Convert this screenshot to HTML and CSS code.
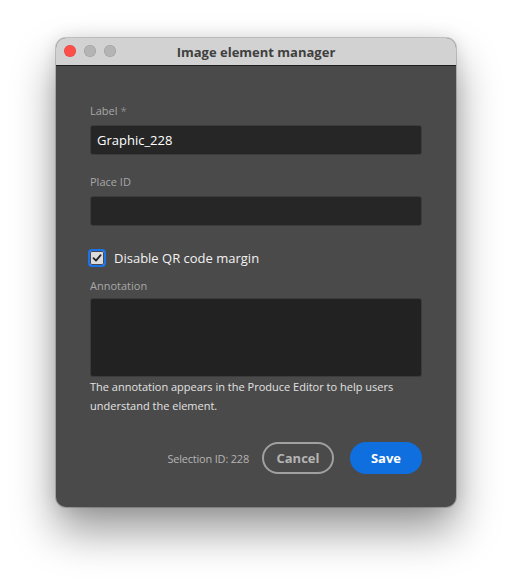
FILE: index.html
```html
<!DOCTYPE html>
<html lang="en">
<head>
  <meta charset="UTF-8">
  <title>Image element manager</title>
  <link rel="stylesheet" href="styles.css">
</head>
<body>

  <div class="window">
    <div class="titlebar">
      <div class="lights">
        <span class="light red"></span>
        <span class="light"></span>
        <span class="light"></span>
      </div>
      <div class="title">Image element manager</div>
    </div>

    <div class="content">
      <label class="field-label">Label <span class="req">*</span></label>
      <div class="input">Graphic_228</div>

      <label class="field-label second">Place ID</label>
      <div class="input"></div>

      <div class="check-row">
        <span class="checkbox">
          <svg width="12" height="12" viewBox="0 0 12 12">
            <path d="M2.5 6.2 L5 8.6 L9.6 3.2" fill="none" stroke="#222" stroke-width="1.8" stroke-linecap="round" stroke-linejoin="round"/>
          </svg>
        </span>
        <span class="check-text">Disable QR code margin</span>
      </div>

      <label class="field-label annot">Annotation</label>
      <div class="textarea"></div>
      <p class="help">The annotation appears in the Produce Editor to help users understand the element.</p>

      <div class="footer">
        <span class="sel-id">Selection ID: 228</span>
        <button class="btn cancel">Cancel</button>
        <button class="btn save">Save</button>
      </div>
    </div>
  </div>

</body>
</html>
```

FILE: styles.css
```css
html {
  background: #fff;
}

body {
  margin: 0;
  padding: 38px 0 0 56px;
  min-height: 582px;
  box-sizing: border-box;
  font-family: "Open Sans", "Noto Sans", sans-serif;
}

.window {
  width: 400px;
  height: 469px;
  background: #4a4a4a;
  border-radius: 10px;
  overflow: hidden;
  box-shadow: 0 0 0 1px rgba(0, 0, 0, 0.18), 0 0 18px rgba(0, 0, 0, 0.12), 0 24px 44px rgba(0, 0, 0, 0.4);
}

.titlebar {
  position: relative;
  height: 27px;
  background: #d2d2d2;
  border-bottom: 1px solid #1c1c1c;
  display: flex;
  align-items: center;
  justify-content: center;
}

.lights {
  position: absolute;
  left: 8px;
  top: 7px;
  display: flex;
  gap: 8px;
}

.light {
  width: 12px;
  height: 12px;
  border-radius: 50%;
  background: #b4b4b4;
  box-shadow: inset 0 0 0 0.5px rgba(0, 0, 0, 0.15);
}

.light.red {
  background: #fd4e4a;
}

.title {
  font-size: 13px;
  font-weight: 700;
  color: #404040;
  margin-top: 1px;
}

.content {
  padding: 37px 34px 0;
  display: flex;
  flex-direction: column;
}

.field-label {
  font-size: 11px;
  line-height: 16px;
  color: #a8a8a8;
  margin-bottom: 6px;
}

.field-label.second {
  margin-top: 19px;
}

.req {
  color: #8a8a8a;
}

.input {
  height: 28px;
  background: #262626;
  border: 1px solid #3c3c3c;
  border-radius: 3px;
  color: #fff;
  font-size: 13px;
  line-height: 28px;
  padding: 0 6px;
}

.check-row {
  display: flex;
  align-items: center;
  gap: 8px;
  margin: 22px 0 0 -2px;
  height: 20px;
}

.checkbox {
  width: 14px;
  height: 14px;
  border: 2px solid #1a73e8;
  border-radius: 4px;
  background: #dcdcdc;
  box-shadow: inset 0 0 0 1px #4a4a4a;
  display: flex;
  align-items: center;
  justify-content: center;
}

.check-text {
  font-size: 13px;
  color: #f2f2f2;
}

.field-label.annot {
  margin-top: 10px;
  margin-bottom: 4px;
}

.textarea {
  height: 77px;
  background: #222;
  border: 1px solid #3c3c3c;
  border-radius: 3px;
}

.help {
  margin: 0;
  font-size: 11px;
  line-height: 19px;
  color: #e2e2e2;
}

.footer {
  display: flex;
  justify-content: flex-end;
  align-items: center;
  margin-top: 27px;
}

.sel-id {
  font-size: 11px;
  color: #b4b4b4;
  margin-right: 13px;
  letter-spacing: -0.2px;
}

.btn {
  width: 72px;
  height: 32px;
  border-radius: 16px;
  font-family: inherit;
  font-size: 13px;
  font-weight: 700;
  cursor: pointer;
}

.cancel {
  background: transparent;
  border: 2px solid #a0a0a0;
  color: #b4b4b4;
}

.save {
  background: #0f6fde;
  border: none;
  color: #fff;
  margin-left: 16px;
}
```
